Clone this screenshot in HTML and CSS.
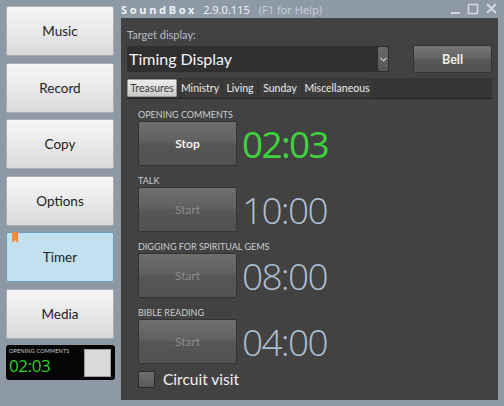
FILE: index.html
```html
<!DOCTYPE html>
<html>
<head>
<meta charset="utf-8">
<link rel="stylesheet" href="styles.css">
</head>
<body>
<div class="app">
  <div class="side">
    <div class="navbtn">Music</div>
    <div class="navbtn">Record</div>
    <div class="navbtn">Copy</div>
    <div class="navbtn">Options</div>
    <div class="navbtn active"><span class="mark"></span>Timer</div>
    <div class="navbtn">Media</div>
    <div class="mini">
      <div class="mini-left">
        <div class="mini-label">OPENING COMMENTS</div>
        <div class="mini-time">02:03</div>
      </div>
      <div class="mini-square"></div>
    </div>
  </div>
  <div class="main">
    <div class="titlebar">
      <span class="appname">SoundBox</span>
      <span class="ver">2.9.0.115</span>
      <span class="help">(F1 for Help)</span>
      <span class="spacer"></span>
      <svg class="winctl" width="50" height="14" viewBox="0 0 50 14">
        <rect x="4" y="11" width="9" height="2" fill="#d3d9df"/>
        <rect x="21.5" y="3.5" width="9" height="9" fill="none" stroke="#d3d9df" stroke-width="1.5"/>
        <path d="M40 3 L49 12 M49 3 L40 12" stroke="#d3d9df" stroke-width="1.8"/>
      </svg>
    </div>
    <div class="panel">
      <div class="tlabel">Target display:</div>
      <div class="toprow">
        <div class="dropdown">
          <span class="ddtext">Timing Display</span>
          <span class="ddarrow"><svg width="7" height="5" viewBox="0 0 7 5"><path d="M0.5 0.8 L3.5 3.8 L6.5 0.8" fill="none" stroke="#d8d8d8" stroke-width="1.1"/></svg></span>
        </div>
        <div class="bell">Bell</div>
      </div>
      <div class="tabs">
        <div class="tab sel t1">Treasures</div>
        <div class="tab t2">Ministry</div>
        <div class="tab t3">Living</div>
        <div class="tab t4">Sunday</div>
        <div class="tab t5">Miscellaneous</div>
      </div>
      <div class="timers">
        <div class="sec">
          <div class="slabel">OPENING COMMENTS</div>
          <div class="srow">
            <div class="tbtn on">Stop</div>
            <div class="time green">02:03</div>
          </div>
        </div>
        <div class="sec">
          <div class="slabel">TALK</div>
          <div class="srow">
            <div class="tbtn">Start</div>
            <div class="time">10:00</div>
          </div>
        </div>
        <div class="sec">
          <div class="slabel">DIGGING FOR SPIRITUAL GEMS</div>
          <div class="srow">
            <div class="tbtn">Start</div>
            <div class="time">08:00</div>
          </div>
        </div>
        <div class="sec">
          <div class="slabel">BIBLE READING</div>
          <div class="srow">
            <div class="tbtn">Start</div>
            <div class="time">04:00</div>
          </div>
        </div>
        <div class="circuit">
          <span class="chk"></span>
          <span class="ctext">Circuit visit</span>
        </div>
      </div>
    </div>
  </div>
</div>
</body>
</html>
```
FILE: styles.css
```css
* { box-sizing: border-box; }
html, body { margin: 0; padding: 0; }
body {
  width: 504px;
  height: 406px;
  background: #8d99a5;
  font-family: "Lato", "Noto Sans", sans-serif;
  overflow: hidden;
}
.app {
  display: flex;
  height: 406px;
}
.side {
  width: 121px;
  padding: 6px 0 0 6px;
  display: flex;
  flex-direction: column;
  gap: 6.5px;
}
.navbtn {
  position: relative;
  width: 108px;
  height: 50px;
  border: 1px solid #a9afb5;
  border-radius: 2px;
  background: linear-gradient(#f6f6f6, #e9e9e9 50%, #d9d9d9);
  display: flex;
  align-items: center;
  justify-content: center;
  font-size: 13.5px;
  color: #222;
}
.navbtn.active {
  background: #c3e0f1;
  border-color: #6f9dbd;
}
.mark {
  position: absolute;
  left: 5px;
  top: -1px;
  width: 6px;
  height: 11px;
  background: #f48b3a;
  clip-path: polygon(0 0, 100% 0, 100% 100%, 50% 75%, 0 100%);
}
.mini {
  width: 109px;
  height: 35px;
  margin-top: -0.5px;
  background: #050505;
  border-radius: 3px;
  display: flex;
  justify-content: space-between;
  padding: 3px 4px 0 3px;
}
.mini-label {
  font-size: 5.5px;
  color: #cfcfcf;
  letter-spacing: 0.15px;
  line-height: 6px;
  height: 7px;
}
.mini-time {
  font-family: "Open Sans", sans-serif;
  font-size: 17px;
  line-height: 20px;
  margin-top: 1px;
  color: #2ecc2e;
  letter-spacing: -0.4px;
}
.mini-square {
  width: 27px;
  height: 28px;
  margin-top: 1px;
  background: #d9d9d9;
  border: 1px solid #a0a0a0;
}
.main {
  width: 377px;
  display: flex;
  flex-direction: column;
}
.titlebar {
  height: 18px;
  display: flex;
  align-items: center;
  font-family: "Noto Sans", sans-serif;
  font-size: 11px;
  color: #eef1f4;
  white-space: nowrap;
}
.appname {
  letter-spacing: 2.7px;
  font-weight: bold;
  margin-right: 6px;
}
.ver { margin-right: 9px; }
.help { color: #c5ced7; }
.spacer { flex: 1; }
.winctl { margin-right: 1px; margin-top: -2px; }
.panel {
  height: 382px;
  background: #424242;
  padding: 9px 6px 0 6px;
}
.tlabel {
  height: 18px;
  font-size: 11px;
  color: #b6bcc2;
  line-height: 16px;
}
.toprow {
  display: flex;
  align-items: center;
  justify-content: space-between;
  height: 28px;
}
.dropdown {
  width: 262px;
  height: 26px;
  background: #2f2f2f;
  display: flex;
  align-items: center;
  justify-content: space-between;
  padding: 0 1px 0 2px;
  border-radius: 1px;
}
.ddtext {
  font-size: 16px;
  color: #f4f4f4;
  line-height: 24px;
}
.ddarrow {
  width: 10px;
  height: 24px;
  background: linear-gradient(#6a6a6a, #565656);
  border-radius: 2px;
  display: flex;
  align-items: center;
  justify-content: center;
}
.bell {
  width: 79px;
  height: 28px;
  border: 1px solid #333;
  border-radius: 2px;
  background: linear-gradient(#757575, #646464 48%, #575757 52%, #535353);
  color: #f0f0f0;
  font-size: 12.5px;
  display: flex;
  align-items: center;
  justify-content: center;
  font-weight: bold;
}
.tabs {
  margin-top: 5px;
  height: 21px;
  background: #353535;
  border-bottom: 1px solid #262626;
  display: flex;
  gap: 2px;
  padding: 1px 0 1px 0;
}
.tab {
  flex: none;
  font-size: 10.5px;
  color: #ececec;
  background: #3b3b3b;
  display: flex;
  align-items: center;
  justify-content: center;
  border-radius: 1px;
  white-space: nowrap;
}
.t1 { width: 50px; }
.t2 { width: 42px; }
.t3 { width: 34px; }
.t4 { width: 42px; }
.t5 { width: 68px; }
.tab.sel {
  background: linear-gradient(#ededed, #c9c9c9);
  color: #3a3a3a;
  border: 1px solid #999;
}
.timers {
  padding: 6px 0 0 11px;
}
.sec { margin-bottom: 5px; }
.slabel {
  font-size: 9px;
  color: #c9ced3;
  line-height: 16px;
  height: 16px;
  padding-top: 2px;
}
.srow {
  display: flex;
  align-items: center;
  gap: 5px;
}
.tbtn {
  width: 99px;
  height: 45px;
  border: 1px solid #333;
  border-radius: 2px;
  background: linear-gradient(#6e6e6e, #616161 45%, #565656 52%, #525252);
  color: #8d8d8d;
  font-size: 12px;
  display: flex;
  align-items: center;
  justify-content: center;
}
.tbtn.on {
  color: #f4f4f4;
  font-weight: bold;
}
.time {
  font-family: "Open Sans", sans-serif;
  font-weight: 300;
  font-size: 37px;
  letter-spacing: -1.7px;
  color: #aebfd0;
  line-height: 45px;
}
.time.green { color: #3fd23f; font-weight: 400; }
.circuit {
  display: flex;
  align-items: center;
  gap: 8px;
  margin-top: 6px;
}
.chk {
  width: 17px;
  height: 17px;
  border: 1px solid #2a2a2a;
  border-radius: 1px;
  background: linear-gradient(#6e6e6e, #5a5a5a);
}
.ctext {
  font-size: 15.5px;
  color: #f2f2f2;
}
```
